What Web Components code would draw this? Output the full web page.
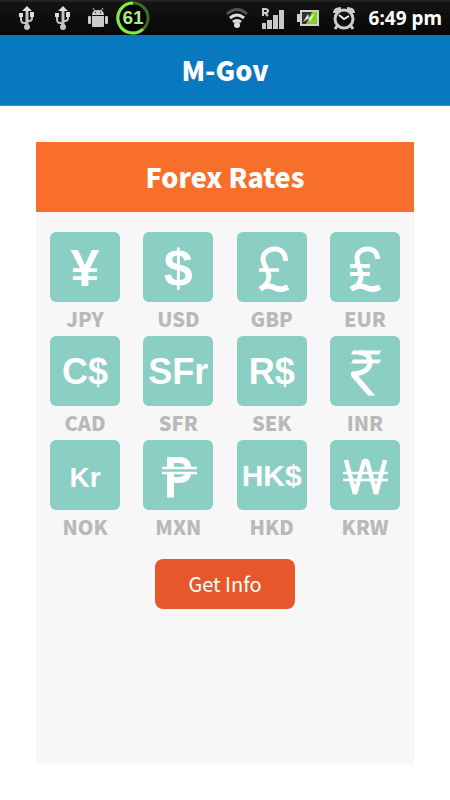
<!DOCTYPE html>
<html lang="en">
<head>
<meta charset="utf-8">
<meta name="viewport" content="width=device-width, initial-scale=1">
<title>M-Gov</title>
<style>
  body {
    margin: 0;
    background: #fff;
    font-family: "Noto Sans CJK SC", "Noto Sans", sans-serif;
  }
</style>
</head>
<body>
<mgov-app></mgov-app>

<template id="status-bar">
  <style>
    :host {
      display: flex;
      align-items: center;
      justify-content: space-between;
      height: 35px;
      padding: 0 8px 0 16px;
      background: linear-gradient(#2a2a2a, #131313 3px, #080808);
      color: #fff;
      font: bold 19px/36px "Noto Sans", sans-serif;
    }
    div {
      display: flex;
      align-items: center;
    }
    .left { gap: 14px; }
    .right { gap: 12px; }
    svg { display: block; }
    .level {
      display: grid;
      width: 34px;
      height: 34px;
      margin-left: -6px;
    }
    .level > * {
      grid-area: 1 / 1;
      place-self: center;
    }
    .level span {
      color: #a6ee86;
      font: bold 19px/34px "Liberation Sans", sans-serif;
    }
  </style>
  <div class="left">
    <svg width="22" height="26" viewBox="0 0 22 26" fill="none" stroke="#c4c4c4" stroke-width="2"><path d="M11 5v17" stroke-width="3"/><path d="M5 10v4q0 4 3 4h3M16 9v4q0 3-3 3h-3"/><path d="M11 1l5 5H6zM3 8h4v4H3zM14 7h4v5h-4z" fill="#ddd" stroke="none"/><circle cx="11" cy="22" r="3" fill="#c4c4c4" stroke="none"/></svg>
    <svg width="22" height="26" viewBox="0 0 22 26" fill="none" stroke="#c4c4c4" stroke-width="2"><path d="M11 5v17" stroke-width="3"/><path d="M5 10v4q0 4 3 4h3M16 9v4q0 3-3 3h-3"/><path d="M11 1l5 5H6zM3 8h4v4H3zM14 7h4v5h-4z" fill="#ddd" stroke="none"/><circle cx="11" cy="22" r="3" fill="#c4c4c4" stroke="none"/></svg>
    <svg width="20" height="20" viewBox="0 0 20 20" fill="#c9c9c9"><path d="M4 7q0-5 6-5t6 5zM4 8h12v10q0 1-1 1H5q-1 0-1-1z"/><rect y="8" width="3" height="8" rx="1"/><rect x="17" y="8" width="3" height="8" rx="1"/><path d="M5 0l2 3M15 0l-2 3" stroke="#c9c9c9"/><path d="M7 4h1v1H7zM12 4h1v1h-1z" fill="#111"/></svg>
    <div class="level">
      <svg width="34" height="34" viewBox="0 0 34 34" fill="none" stroke-width="3"><circle cx="17" cy="17" r="15" fill="#000" stroke="#3f6b20"/><path d="M17 2A15 15 0 1 0 27 28" stroke="#84ee3c"/></svg>
      <span>61</span>
    </div>
  </div>
  <div class="right">
    <svg width="22" height="22" viewBox="0 0 22 22" fill="none" stroke-width="3"><path d="M1 7q10-9 20 0" stroke="#555"/><path d="M4 11q7-6 14 0" stroke="#ddd"/><path d="M7 15q4-3 8 0" stroke="#ddd"/><circle cx="11" cy="18" r="3" fill="#ddd"/></svg>
    <svg width="25" height="24" viewBox="0 0 25 24" fill="#c9c9c9"><path d="M2 17h4v6H2zM7 14h5v9H7zM13 9h5v14h-5zM19 4h5v19h-5z"/><path d="M3 10V3h2q3 0 3 2T5 7H3M5 7l3 3" fill="none" stroke="#ccc" stroke-width="2"/></svg>
    <svg width="22" height="18" viewBox="0 0 22 18"><path d="M3 1h19v16H3v-4H0V5h3z" fill="#d0d0d0"/><path d="M5 3h15v12H5z" fill="#333"/><path d="M15 3h5v12H9z" fill="#7fd31c"/><path d="M6 13l5-8 1 4 6-5-5 9-1-4z" fill="#e8e8e8"/></svg>
    <svg width="26" height="26" viewBox="0 0 26 26" fill="none" stroke="#ccc"><circle cx="13" cy="14" r="9" stroke-width="3"/><path d="M4 8q0-4 6-4M22 8q0-4-6-4" stroke-width="4"/><path d="M6 21l-2 3M20 21l2 3" stroke-width="3"/><path d="M8 10l5 4 5-3" stroke="#eee" stroke-width="2"/></svg>
    <time>6:49 pm</time>
  </div>
</template>

<template id="currency-tile">
  <style>
    :host { display: block; }
    button {
      display: block;
      width: 70px;
      padding: 0;
      border: 0;
      background: none;
      color: #b9b9b9;
      font: 900 20px/34px "Noto Sans CJK SC", "Noto Sans", sans-serif;
      cursor: pointer;
    }
    .symbol {
      display: block;
      height: 70px;
      border-radius: 6px;
      background: #8bcec3;
      color: #fff;
      font: bold 36px/72px "Liberation Sans", sans-serif;
    }
    :host([kind="small"]) .symbol {
      font-size: 28px;
      line-height: 76px;
    }
    :host([kind="long"]) .symbol { font-size: 30px; }
    :host([kind="big"]) .symbol { font-size: 52px; }
    ::slotted(svg) {
      display: block;
      fill: none;
      stroke: #fff;
    }
  </style>
  <button type="button">
    <span class="symbol"><slot name="symbol"></slot></span>
    <slot></slot>
  </button>
</template>

<template id="mgov-app">
  <style>
    :host {
      display: flex;
      flex-direction: column;
      min-height: 100vh;
    }
    header {
      border-bottom: 1px solid #3b8dc7;
      background: #0878bf;
    }
    h1, h2 {
      margin: 0;
      color: #fff;
      font-size: 27px;
      font-weight: 900;
      line-height: 70px;
      text-align: center;
    }
    main {
      display: flex;
      flex: 1;
      padding: 36px;
    }
    section {
      flex: 1;
      background: #f7f7f7;
    }
    h2 { background: #f86e2b; }
    .rates {
      display: grid;
      grid-template-columns: repeat(4, max-content);
      justify-content: space-between;
      padding: 20px 14px 15px;
    }
    .info {
      display: block;
      width: 140px;
      height: 50px;
      margin: 0 auto;
      padding: 0;
      border: 0;
      border-radius: 8px;
      background: #e6582c;
      color: #fff;
      font: 20px/50px "Noto Sans CJK SC", "Noto Sans", sans-serif;
      cursor: pointer;
    }
  </style>
  <status-bar></status-bar>
  <header><h1>M-Gov</h1></header>
  <main>
    <section>
      <h2>Forex Rates</h2>
      <div class="rates">
        <currency-tile kind="big"><span slot="symbol">¥</span>JPY</currency-tile>
        <currency-tile kind="big"><span slot="symbol">$</span>USD</currency-tile>
        <currency-tile><svg slot="symbol" width="70" height="70" viewBox="0 0 70 70" stroke-width="5"><path d="M48.500 29C48.500 21 44 17 38 17C30 17 26 22 26 27C26 33 32 38 32 45Q31 52 24 57"/><path d="M23 57Q30 52 37 55.500T51 55" stroke-width="5.500"/><path d="M22 38H42" stroke-width="3.500"/></svg>GBP</currency-tile>
        <currency-tile><svg slot="symbol" width="70" height="70" viewBox="0 0 70 70" stroke-width="5"><path d="M47.500 27C47.500 20 43 17 37.500 17C31 17 27 21 27 26C27 34 32 39 31 46Q30 53 22 57"/><path d="M21 57Q29 52 36 55.500T50 55" stroke-width="5.500"/><path d="M20 34H40M20 42H40" stroke-width="4"/></svg>EUR</currency-tile>
        <currency-tile><span slot="symbol">C$</span>CAD</currency-tile>
        <currency-tile><span slot="symbol">SFr</span>SFR</currency-tile>
        <currency-tile><span slot="symbol">R$</span>SEK</currency-tile>
        <currency-tile><svg slot="symbol" width="70" height="70" viewBox="0 0 70 70"><path d="M23 14.500H51L49 18.500H21zM23 23.500H51L49 27.500H21zM21 36H25L45 59.500H38L21 40z" fill="#fff" stroke="none"/><path d="M29 16.500Q40 17 40 26Q40 37 22 38" stroke-width="5"/></svg>INR</currency-tile>
        <currency-tile kind="small"><span slot="symbol">Kr</span>NOK</currency-tile>
        <currency-tile><svg slot="symbol" width="70" height="70" viewBox="0 0 70 70"><path d="M27.500 57.500V17" stroke-width="7"/><path d="M27 20H36Q45.500 20 45.500 30T36 40H27" stroke-width="6"/><path d="M19 30.500H54" stroke="#8bcec3" stroke-width="7"/><path d="M19 28H54M19 33H54" stroke-width="2.500"/></svg>MXN</currency-tile>
        <currency-tile kind="long"><span slot="symbol">HK$</span>HKD</currency-tile>
        <currency-tile><svg slot="symbol" width="70" height="70" viewBox="0 0 70 70"><path d="M16 20L25 54L34 21H37L46 54L55 20" stroke-width="4.500" stroke-linejoin="bevel"/><path d="M13 33H58M13 40H58" stroke-width="2.500"/></svg>KRW</currency-tile>
      </div>
      <button class="info" type="button">Get Info</button>
    </section>
  </main>
</template>

<script>
  const define = (name) => {
    const template = document.getElementById(name);

    customElements.define(name, class extends HTMLElement {
      constructor() {
        super();
        this.attachShadow({ mode: "open" });
        this.shadowRoot.appendChild(template.content.cloneNode(true));
      }
    });
  };

  define("status-bar");
  define("currency-tile");
  define("mgov-app");
</script>
</body>
</html>
